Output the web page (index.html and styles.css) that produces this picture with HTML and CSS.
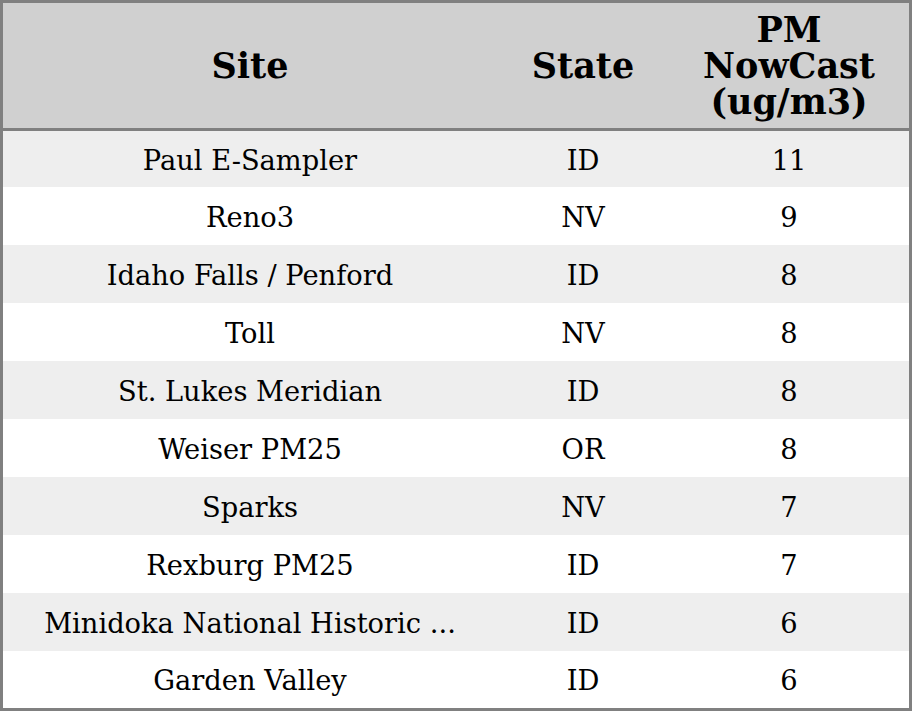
FILE: index.html
```html
<!DOCTYPE html>
<html>
<head>
<meta charset="utf-8">
<link rel="stylesheet" href="styles.css">
</head>
<body>
<table class="grid">
  <colgroup>
    <col class="c-site">
    <col class="c-state">
    <col class="c-pm">
  </colgroup>
  <thead>
    <tr>
      <th>Site</th>
      <th>State</th>
      <th>PM<br>NowCast<br>(ug/m3)</th>
    </tr>
  </thead>
  <tbody>
    <tr><td>Paul E-Sampler</td><td>ID</td><td>11</td></tr>
    <tr><td>Reno3</td><td>NV</td><td>9</td></tr>
    <tr><td>Idaho Falls / Penford</td><td>ID</td><td>8</td></tr>
    <tr><td>Toll</td><td>NV</td><td>8</td></tr>
    <tr><td>St. Lukes Meridian</td><td>ID</td><td>8</td></tr>
    <tr><td>Weiser PM25</td><td>OR</td><td>8</td></tr>
    <tr><td>Sparks</td><td>NV</td><td>7</td></tr>
    <tr><td>Rexburg PM25</td><td>ID</td><td>7</td></tr>
    <tr><td>Minidoka National Historic ...</td><td>ID</td><td>6</td></tr>
    <tr><td>Garden Valley</td><td>ID</td><td>6</td></tr>
  </tbody>
</table>
</body>
</html>
```
FILE: styles.css
```css
html, body {
  margin: 0;
  padding: 0;
  background: #ffffff;
}
.grid {
  width: 912px;
  border-collapse: separate;
  border-spacing: 0;
  border: 3px solid #808080;
  font-family: "DejaVu Serif", serif;
  color: #000;
  table-layout: fixed;
}
.c-site { width: 494px; }
.c-state { width: 172px; }
.c-pm { width: 240px; }
.grid th {
  background: #d0d0d0;
  font-weight: bold;
  font-size: 35px;
  line-height: 36px;
  height: 125px;
  padding: 0;
  text-align: center;
  vertical-align: middle;
  border-bottom: 3px solid #808080;
}
.grid td {
  font-size: 27.3px;
  line-height: 32px;
  height: 55px;
  padding: 3px 0 0;
  text-align: center;
  vertical-align: middle;
  white-space: nowrap;
}
.grid tbody tr:first-child td {
  height: 53px;
}
.grid tbody tr:last-child td {
  height: 54px;
}
.grid tbody tr:nth-child(odd) td {
  background: #eeeeee;
}
```
